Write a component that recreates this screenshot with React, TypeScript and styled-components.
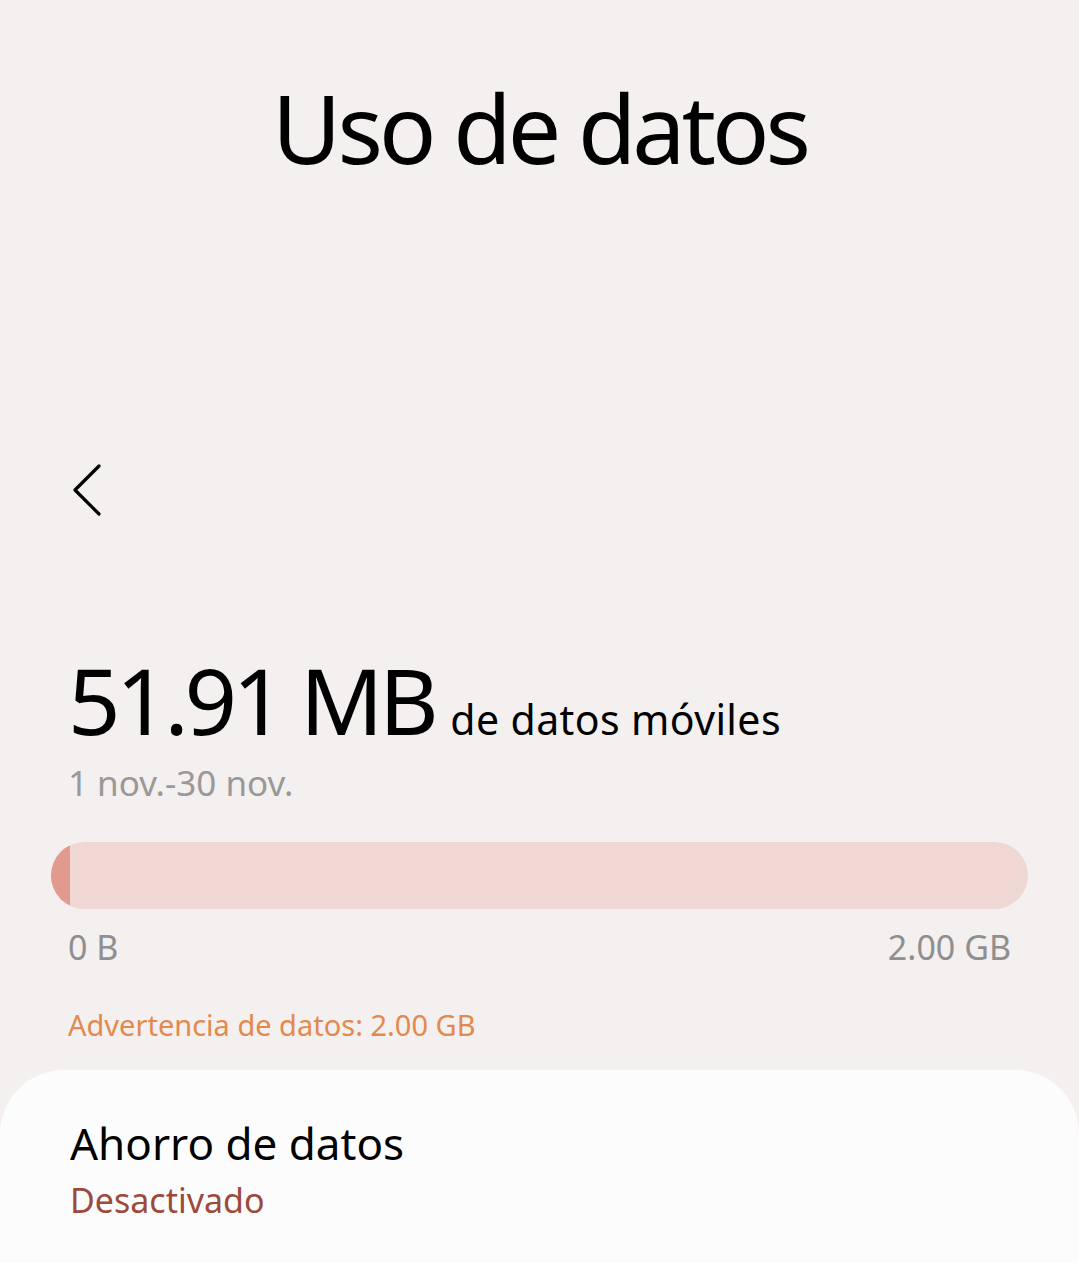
import styled, { createGlobalStyle } from "styled-components";

const GlobalStyle = createGlobalStyle`
  html, body {
    margin: 0;
    padding: 0;
    background: #f4f0ef;
  }
  body {
    font-family: "Noto Sans", "Open Sans", sans-serif;
    color: #000;
  }
`;

const Screen = styled.div`
  width: 1079px;
  height: 1263px;
  overflow: hidden;
  display: flex;
  flex-direction: column;
`;

const TitleArea = styled.div`
  height: 430px;
  display: flex;
  justify-content: center;
  padding-top: 72px;
  box-sizing: border-box;
`;

const Title = styled.h1`
  margin: 0;
  font-size: 95px;
  font-weight: 400;
  line-height: 110px;
  letter-spacing: -4px;
`;

const Toolbar = styled.div`
  height: 120px;
  display: flex;
  align-items: center;
  padding-left: 70px;
`;

const BackButton = styled.button`
  width: 40px;
  height: 60px;
  padding: 0;
  border: none;
  background: none;
  display: flex;
  align-items: center;
`;

const Summary = styled.div`
  padding: 100px 51px 0 51px;
  display: flex;
  flex-direction: column;
`;

const UsageLine = styled.div`
  display: flex;
  align-items: baseline;
  gap: 16px;
  padding-left: 17px;
`;

const UsageValue = styled.span`
  font-size: 92px;
  line-height: 100px;
  letter-spacing: -4.5px;
`;

const UsageUnit = styled.span`
  font-size: 41px;
  letter-spacing: 0.4px;
`;

const Period = styled.div`
  margin-top: 10px;
  padding-left: 17px;
  font-size: 35px;
  line-height: 46px;
  color: #9a9898;
`;

const Bar = styled.div`
  margin-top: 36px;
  height: 67px;
  border-radius: 34px;
  background: #efd8d3;
  overflow: hidden;
  display: flex;
`;

const BarFill = styled.div`
  height: 100%;
  background: #e19a8d;
`;

const Scale = styled.div`
  display: flex;
  justify-content: space-between;
  padding: 14px 17px 0 17px;
  font-size: 34px;
  line-height: 48px;
  color: #8f8f8f;
`;

const Warning = styled.div`
  margin-top: 34px;
  padding-left: 17px;
  font-size: 29px;
  line-height: 40px;
  color: #e3894d;
`;

const Card = styled.div`
  margin-top: 25px;
  flex: 1;
  background: #fcfcfc;
  border-radius: 64px 64px 0 0;
  padding: 44px 70px 0 70px;
`;

const CardTitle = styled.div`
  font-size: 44px;
  line-height: 58px;
`;

const CardStatus = styled.div`
  font-size: 34px;
  line-height: 56px;
  color: #9c4a3b;
`;

export default function App() {
  const used = 51.91;
  const limit = 2048;
  // the bar always shows a small sliver, even for tiny usage
  const pct = Math.max((used / limit) * 100, 2) * 0.78;

  return (
    <Screen>
      <GlobalStyle />
      <TitleArea>
        <Title>Uso de datos</Title>
      </TitleArea>
      <Toolbar>
        <BackButton aria-label="Atrás">
          <svg width="34" height="56" viewBox="0 0 34 56" fill="none">
            <path
              d="M29 4 L5 28 L29 52"
              stroke="#000"
              strokeWidth="3.2"
              strokeLinecap="round"
              strokeLinejoin="round"
            />
          </svg>
        </BackButton>
      </Toolbar>
      <Summary>
        <UsageLine>
          <UsageValue>51.91 MB</UsageValue>
          <UsageUnit>de datos móviles</UsageUnit>
        </UsageLine>
        <Period>1 nov.-30 nov.</Period>
        <Bar>
          <BarFill style={{ width: `${pct}%` }} />
        </Bar>
        <Scale>
          <span>0 B</span>
          <span>2.00 GB</span>
        </Scale>
        <Warning>Advertencia de datos: 2.00 GB</Warning>
      </Summary>
      <Card>
        <CardTitle>Ahorro de datos</CardTitle>
        <CardStatus>Desactivado</CardStatus>
      </Card>
    </Screen>
  );
}
